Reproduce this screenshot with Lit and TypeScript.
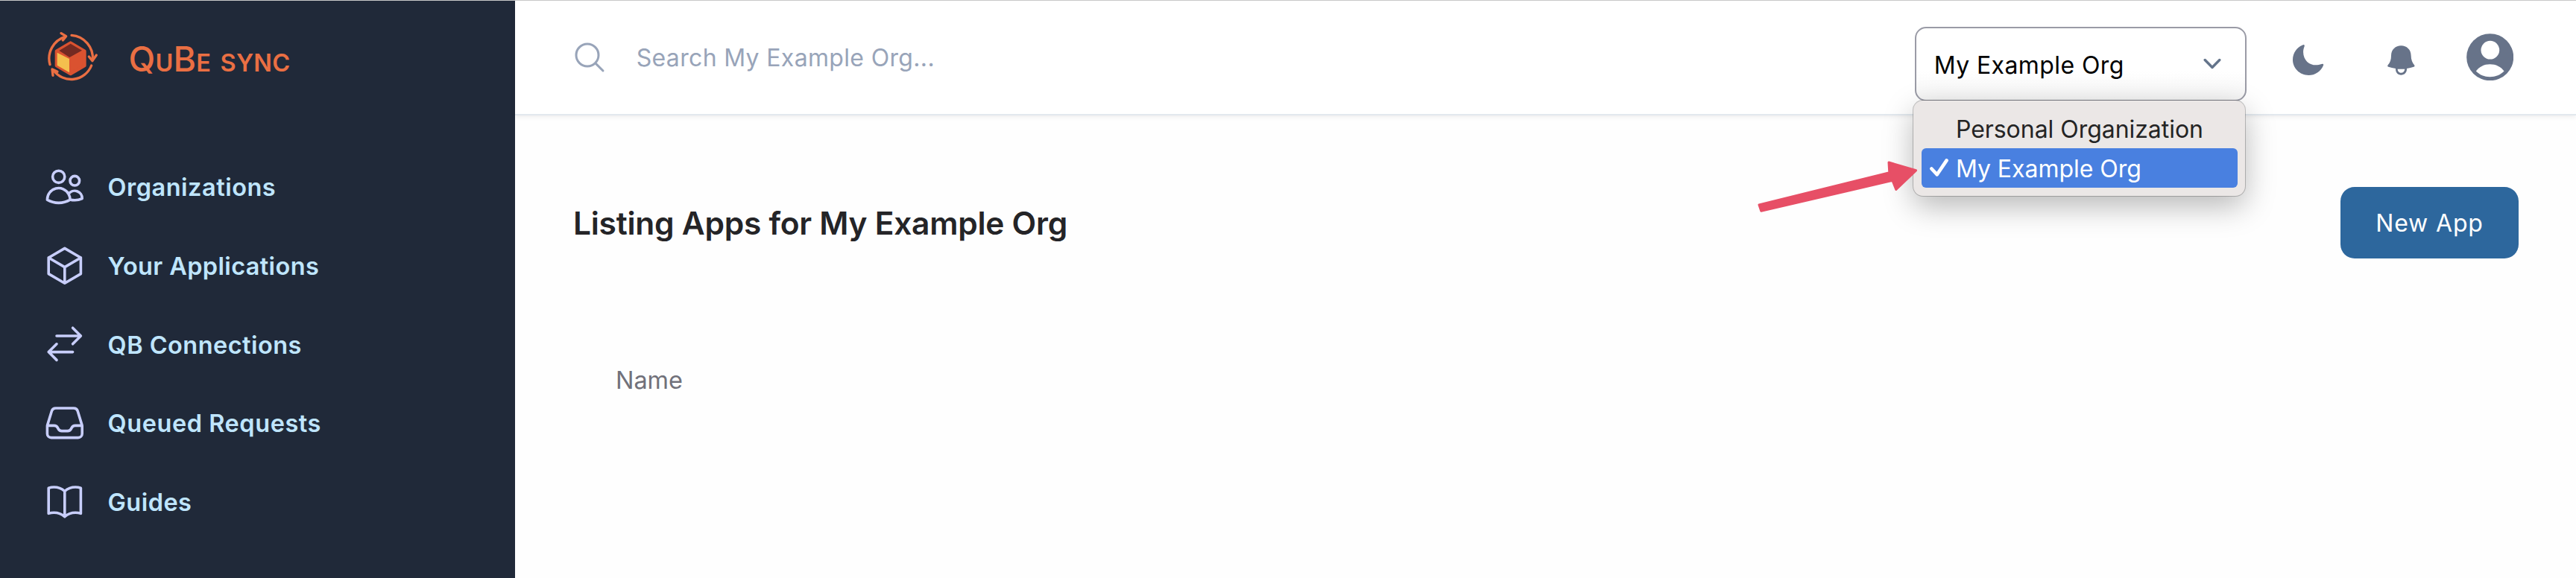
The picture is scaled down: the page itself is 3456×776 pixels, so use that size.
import { LitElement, html, css, svg } from "lit";

const navItems = [
  {
    label: "Organizations",
    spacing: 0.5,
    d: "M15 19.128a9.38 9.38 0 0 0 2.625.372 9.337 9.337 0 0 0 4.121-.952 4.125 4.125 0 0 0-7.533-2.493M15 19.128v-.003c0-1.113-.285-2.16-.786-3.07M15 19.128v.106A12.318 12.318 0 0 1 8.624 21c-2.331 0-4.512-.645-6.374-1.766l-.001-.109a6.375 6.375 0 0 1 11.964-3.07M12 6.375a3.375 3.375 0 1 1-6.75 0 3.375 3.375 0 0 1 6.75 0Zm8.25 2.25a2.625 2.625 0 1 1-5.25 0 2.625 2.625 0 0 1 5.25 0Z",
  },
  {
    label: "Your Applications",
    spacing: 0.36,
    d: "m21 7.5-9-5.25L3 7.5m18 0-9 5.25m9-5.25v9l-9 5.25M3 7.5l9 5.25M3 7.5v9l9 5.25m0-9v9",
  },
  {
    label: "QB Connections",
    spacing: 0.46,
    d: "M7.5 21 3 16.5m0 0L7.5 12M3 16.5h13.5m0-13.5L21 7.5m0 0L16.5 12M21 7.5H7.5",
  },
  {
    label: "Queued Requests",
    spacing: 0.55,
    d: "M2.25 13.5h3.86a2.25 2.25 0 0 1 2.012 1.244l.256.512a2.25 2.25 0 0 0 2.013 1.244h3.218a2.25 2.25 0 0 0 2.013-1.244l.256-.512a2.25 2.25 0 0 1 2.013-1.244h3.859m-19.5.338V18a2.25 2.25 0 0 0 2.25 2.25h15A2.25 2.25 0 0 0 21.75 18v-4.162c0-.224-.034-.447-.1-.661L19.24 5.338a2.25 2.25 0 0 0-2.15-1.588H6.911a2.25 2.25 0 0 0-2.15 1.588L2.35 13.177a2.25 2.25 0 0 0-.1.661Z",
  },
  {
    label: "Guides",
    spacing: 0.45,
    d: "M12 6.042A8.967 8.967 0 0 0 6 3.75c-1.052 0-2.062.18-3 .512v14.25A8.987 8.987 0 0 1 6 18c2.305 0 4.408.867 6 2.292m0-14.25a8.966 8.966 0 0 1 6-2.292c1.052 0 2.062.18 3 .512v14.25A8.987 8.987 0 0 0 18 18a8.967 8.967 0 0 0-6 2.292m0-14.25v14.25",
  },
];

const logo = svg`<svg class="logo" viewBox="70 66 206 206">
  <g fill="none" stroke="#ea6f43" stroke-width="10" stroke-linecap="round" stroke-linejoin="round">
    <path d="M169 82A92 92 0 0 1 254 182" />
    <path d="M239 168L253 185L269 162" />
    <path d="M249 204A88 88 0 0 1 96 223" />
    <path d="M94 244L91 219L112 229" />
    <path d="M82 200A92 92 0 0 1 143 88" />
    <path d="M127 74L147 86L134 102" />
  </g>
  <path fill="#da5230" stroke="#da5230" stroke-width="14" stroke-linejoin="round" d="M165 113L221 146V204L165 237L109 204V146Z" />
  <path fill="#732a22" d="M165 116L211 143L161 171L119 144Z" />
  <path fill="#f4c04e" d="M111 152L160 177V232L111 203Z" />
</svg>`;

class AppRoot extends LitElement {
  static styles = css`
    :host { display: block; font-family: Inter, "Liberation Sans", sans-serif; }
    * { box-sizing: border-box; }
    svg { display: block; flex: none; }
    .app { display: flex; height: 776px; border-top: 1px solid #c8c8c8; background: #fff; overflow: hidden; }
    .sidebar { width: 691px; flex: none; background: #202939; }
    .brand { display: flex; align-items: center; height: 151px; padding-left: 63.3px; }
    .logo { width: 68.67px; height: 68.67px; }
    .brand-name { margin: 10px 0 0 40.5px; font-size: 46.5px; line-height: 56px; font-weight: 500; letter-spacing: .2px; word-spacing: 4px; text-transform: uppercase; color: #ea6f43; white-space: nowrap; }
    .low { font-size: 32.5px; font-weight: 600; }
    .nav { margin-top: 46.2px; }
    .nav-item { display: flex; align-items: center; height: 105.6px; padding-left: 57.7px; gap: 29.3px; font-size: 32.5px; font-weight: 600; color: #bfe5fd; white-space: nowrap; }
    .nav-item span { padding-top: 2px; }
    .nav-item svg { width: 57.6px; height: 57.6px; fill: none; stroke: #c8cefb; stroke-width: 1.5; stroke-linecap: round; stroke-linejoin: round; }
    .main { flex: 1; min-width: 0; background: #fefefe; }
    .topbar { position: relative; display: flex; align-items: center; height: 154px; padding: 0 84px 0 76.3px; background: #fff; border-bottom: 2px solid #e2e8ee; box-shadow: 0 2px 6px rgba(0, 0, 0, .07); }
    .search { display: flex; align-items: center; gap: 38.4px; flex: 1; font-size: 32px; letter-spacing: .335px; color: #98a4b9; }
    .search svg { width: 48px; height: 48px; fill: none; stroke: #98a4b9; stroke-width: 1.5; stroke-linecap: round; }
    .select { position: relative; width: 445px; height: 100px; margin-top: 18px; display: flex; align-items: center; justify-content: space-between; padding: 2px 32px 0 24px; border: 2px solid #9a9ba6; border-radius: 15px; font-size: 32px; letter-spacing: .4px; color: #000; background: linear-gradient(#fff 60%, #f5f5f5); }
    .select > svg { margin-top: -2px; }
    .menu { position: absolute; left: -3.5px; top: 97.3px; width: 445px; height: 127.4px; padding: 10.7px; border-radius: 13px; background: #ebe7e6; box-shadow: 0 0 0 1px rgba(0, 0, 0, .22), 0 14px 40px rgba(0, 0, 0, .28); letter-spacing: -.04px; color: #242424; }
    .option { display: flex; align-items: center; height: 53px; padding-left: 11px; border-radius: 6px; gap: 10px; white-space: nowrap; line-height: 53px; }
    .option span { padding-top: 2px; }
    .option svg { width: 25px; height: 24px; }
    .option.on { background: #4980e0; color: #fff; }
    .moon { width: 41.3px; height: 41.3px; margin: 7px 0 0 62.5px; }
    .bell { width: 36.7px; height: 40px; margin: 8px 0 0 85.4px; }
    .avatar { width: 63.4px; height: 63.4px; margin: -1px 0 0 69px; }
    .toolbar { display: flex; align-items: center; justify-content: space-between; padding: 96px 77px 0; }
    .title { margin: 2px 0 0 1px; font-size: 42.5px; line-height: 56px; font-weight: 600; letter-spacing: -.27px; color: #242427; white-space: nowrap; }
    .new { width: 239px; height: 96px; border-radius: 19px; background: #2d679d; color: #fff; font-size: 32px; font-weight: 400; letter-spacing: .85px; line-height: 97px; text-align: center; }
    .column { padding: 144px 0 0 135px; font-size: 32.5px; line-height: 40px; letter-spacing: -.06px; color: #71717a; }
    .pointer { position: absolute; left: 1667px; top: 213px; width: 216px; height: 74px; }
  `;

  render() {
    return html`<div class="app">
      <aside class="sidebar">
        <div class="brand">${logo}<div class="brand-name">Q<span class="low">u</span>B<span class="low">e sync</span></div></div>
        <nav class="nav">
          ${navItems.map(
            (n) => html`<div class="nav-item">
              <svg viewBox="0 0 24 24"><path d=${n.d} /></svg>
              <span style="letter-spacing:${n.spacing}px">${n.label}</span>
            </div>`
          )}
        </nav>
      </aside>
      <div class="main">
        <header class="topbar">
          <div class="search">
            <svg viewBox="0 0 24 24"><path d="m21 21-5.197-5.197m0 0A7.5 7.5 0 1 0 5.196 5.196a7.5 7.5 0 0 0 10.607 10.607Z" /></svg>
            <span>Search My Example Org...</span>
          </div>
          <div class="select">
            <span>My Example Org</span>
            <svg width="24" height="16" viewBox="0 0 24 16"><path d="M2.2 2.5L12 12.5L21.8 2.5" fill="none" stroke="#64748b" stroke-width="3.4" stroke-linecap="round" stroke-linejoin="round" /></svg>
            <div class="menu">
              <div class="option"><svg></svg><span>Personal Organization</span></div>
              <div class="option on">
                <svg viewBox="0 0 25 24"><path d="M2.4 13.5L9.8 21.3L22.6 2.4" fill="none" stroke="#fff" stroke-width="4.6" stroke-linecap="round" stroke-linejoin="round" /></svg>
                <span>My Example Org</span>
              </div>
            </div>
          </div>
          <svg class="moon" viewBox="168 119 124 124"><path fill="#677389" d="M206 121Q217 116 215 126C205 150 212 174 226 188C242 203 265 204 284 197Q294 194 291 203C280 228 258 242 232 242C196 242 168 214 168 180C168 152 185 130 206 121Z" /></svg>
          <svg class="bell" viewBox="548 123 110 120"><path fill="#677389" fill-rule="evenodd" d="M563 164C563 140 581 124 603 124C625 124 643 140 643 164C643 180 648 192 656 202Q660 207 654 209Q641 213 626 216V219C626 232 616 242 603 242C590 242 581 232 581 219V216Q565 213 552 209Q546 207 550 202C559 192 563 180 563 164ZM589 218H618C617 227 611 233 603 233C596 233 589 227 589 218Z" /></svg>
          <svg class="avatar" viewBox="866.5 74.5 190 190">
            <circle cx="961.5" cy="169.5" r="94.5" fill="#677389" />
            <circle cx="962" cy="141" r="37" fill="#fff" />
            <path fill="#fff" d="M905 226C918 208 938 198 961 198C985 198 1005 208 1018 226C1003 241 984 249 961 249C938 249 920 241 905 226Z" />
          </svg>
          <svg class="pointer" viewBox="0 0 216 74"><path fill="#e74f66" stroke="#e74f66" stroke-width="3" stroke-linejoin="round" d="M2 61L176.800 17.600L176 4L212.500 14.800L185.800 40.500L181 28.400L4.800 69.300Z" /></svg>
        </header>
        <div class="toolbar">
          <h1 class="title">Listing Apps for My Example Org</h1>
          <div class="new">New App</div>
        </div>
        <div class="column">Name</div>
      </div>
    </div>`;
  }
}
customElements.define("app-root", AppRoot);
